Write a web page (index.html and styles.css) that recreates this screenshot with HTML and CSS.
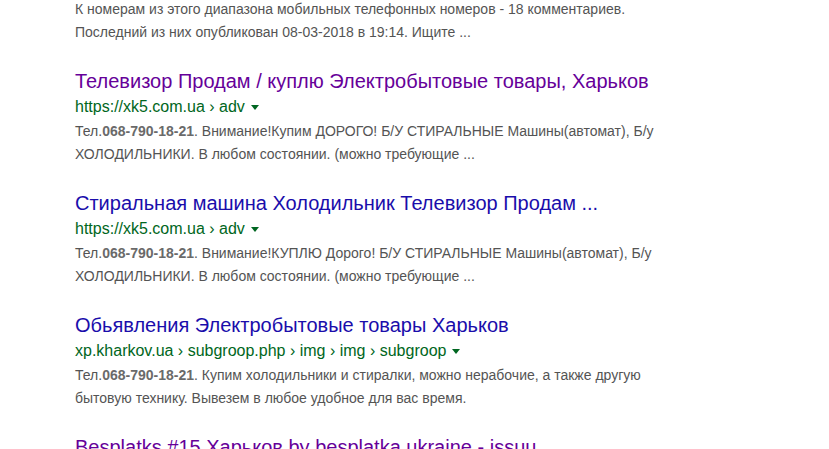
FILE: index.html
```html
<!DOCTYPE html>
<html lang="ru">
<head>
<meta charset="utf-8">
<link rel="stylesheet" href="styles.css">
</head>
<body>
<div class="results">
  <div class="result first">
    <div class="snippet">К номерам из этого диапазона мобильных телефонных номеров - 18 комментариев.<br>Последний из них опубликован 08-03-2018 в 19:14. Ищите ...</div>
  </div>
  <div class="result">
    <a class="title visited">Телевизор Продам / куплю Электробытовые товары, Харьков</a>
    <div class="url">https://xk5.com.ua › adv<span class="arrow"></span></div>
    <div class="snippet">Тел.<b>068-790-18-21</b>. Внимание!Купим ДОРОГО! Б/У СТИРАЛЬНЫЕ Машины(автомат), Б/у<br>ХОЛОДИЛЬНИКИ. В любом состоянии. (можно требующие ...</div>
  </div>
  <div class="result">
    <a class="title">Стиральная машина Холодильник Телевизор Продам ...</a>
    <div class="url">https://xk5.com.ua › adv<span class="arrow"></span></div>
    <div class="snippet">Тел.<b>068-790-18-21</b>. Внимание!КУПЛЮ Дорого! Б/У СТИРАЛЬНЫЕ Машины(автомат), Б/у<br>ХОЛОДИЛЬНИКИ. В любом состоянии. (можно требующие ...</div>
  </div>
  <div class="result">
    <a class="title">Обьявления Электробытовые товары Харьков</a>
    <div class="url">xp.kharkov.ua › subgroop.php › img › img › subgroop<span class="arrow"></span></div>
    <div class="snippet">Тел.<b>068-790-18-21</b>. Купим холодильники и стиралки, можно нерабочие, а также другую<br>бытовую технику. Вывезем в любое удобное для вас время.</div>
  </div>
  <div class="result">
    <a class="title visited">Besplatks #15 Харьков by besplatka ukraine - issuu</a>
  </div>
</div>
</body>
</html>
```
FILE: styles.css
```css
html, body {
  margin: 0;
  padding: 0;
  background: #fff;
}
body {
  font-family: "Liberation Sans", Arial, sans-serif;
  overflow: hidden;
}
.results {
  padding-left: 75px;
  margin-top: -2px;
}
.result {
  margin-bottom: 25px;
}
.title {
  display: block;
  font-size: 20px;
  line-height: 26px;
  color: #1a0dab;
  text-decoration: none;
}
.title.visited {
  color: #660099;
}
.url {
  font-size: 16px;
  line-height: 26px;
  color: #006621;
}
.arrow {
  display: inline-block;
  width: 0;
  height: 0;
  border-left: 4px solid transparent;
  border-right: 4px solid transparent;
  border-top: 5px solid #006621;
  margin-left: 6px;
  vertical-align: middle;
}
.snippet {
  font-size: 14px;
  line-height: 22.5px;
  color: #545454;
}
.snippet b {
  color: #6a6a6a;
}
```
